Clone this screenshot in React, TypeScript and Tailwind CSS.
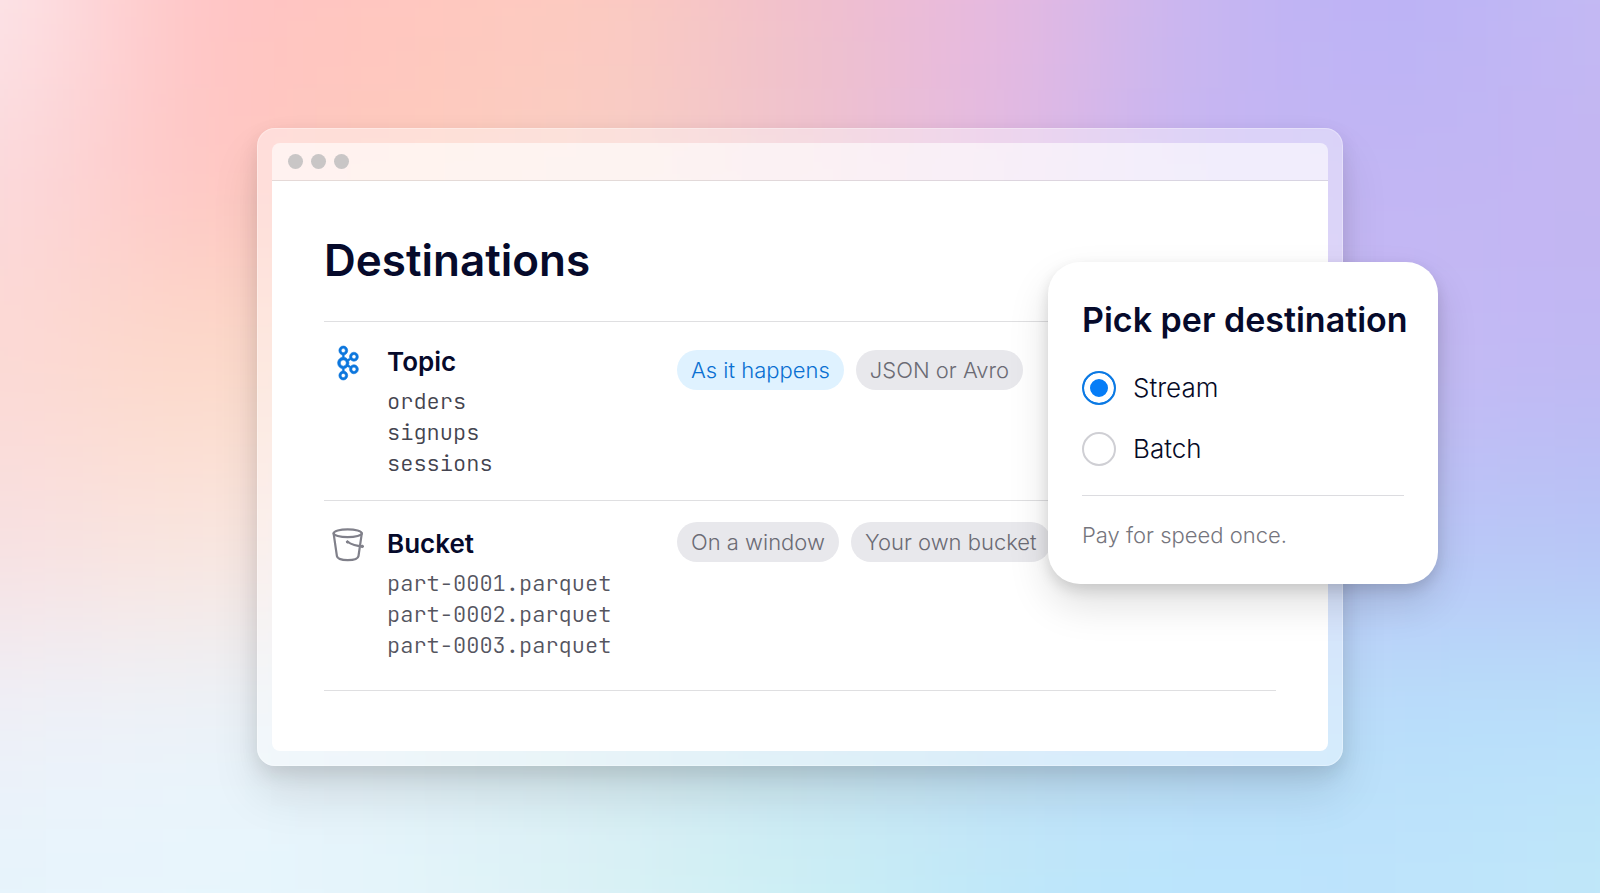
import type { ReactNode } from "react";
import { SiApachekafka } from "react-icons/si";

/* Colour nodes of the backdrop, row by row from the top left corner. */
const MESH: string[][] = [
  ["#fce6ea", "#ffc3c4", "#ffc6bf", "#fdcbc0", "#f0c0cc", "#e8b9e0", "#c6b6f2", "#bab2f6", "#c4baf3"],
  ["#fbdadd", "#ffc5c3", "#fecbbb", "#f8cfc4", "#efc3cc", "#e3b9e2", "#c4b5f3", "#c2b6f4", "#c3b5f2"],
  ["#fcd9d5", "#fcd9c7", "#fbdcd0", "#f5d6d6", "#eccfde", "#dcc4ea", "#cbbcf4", "#c6b9f5", "#c0b8f3"],
  ["#f8dfe1", "#fbe5dc", "#f4e6e6", "#eae6ee", "#dcdcf0", "#cdd2f4", "#c0c8f6", "#bac6f7", "#b7c4f6"],
  ["#eef0f8", "#ecf3fa", "#e2eff6", "#d6ebf2", "#cae4f2", "#c3e0f6", "#bcddfa", "#b8defa", "#b9e0fa"],
  ["#e6f4fc", "#e8f6fe", "#e4f5fb", "#dbf2f6", "#ccf0f4", "#bfe8f9", "#bae5fd", "#bfe4fb", "#c0e8f9"],
];

function Backdrop() {
  const lastRow = MESH.length - 1;
  const lastCol = MESH[0].length - 1;
  return (
    <svg
      aria-hidden="true"
      viewBox="0 0 8 5"
      preserveAspectRatio="none"
      className="absolute inset-0 h-full w-full"
    >
      <defs>
        <filter id="soften" filterUnits="userSpaceOnUse" x="-2" y="-2" width="12" height="9" colorInterpolationFilters="sRGB">
          <feGaussianBlur stdDeviation="0.42" />
        </filter>
      </defs>
      <g filter="url(#soften)">
        {MESH.map((row, r) =>
          row.map((fill, c) => {
            const x = c === 0 ? -2 : c - 0.5;
            const y = r === 0 ? -2 : r - 0.5;
            const right = c === lastCol ? 10 : c + 0.52;
            const bottom = r === lastRow ? 7 : r + 0.52;
            return <rect key={`${r}-${c}`} x={x} y={y} width={right - x} height={bottom - y} fill={fill} />;
          }),
        )}
      </g>
    </svg>
  );
}

function BucketIcon() {
  return (
    <svg
      aria-hidden="true"
      viewBox="0 0 34 34"
      className="h-[34px] w-[34px]"
      fill="none"
      stroke="#80808a"
      strokeWidth="2.2"
      strokeLinecap="round"
      strokeLinejoin="round"
    >
      <ellipse cx="16.7" cy="5.2" rx="14.1" ry="3.9" />
      <path d="M2.6 5.4 5.9 28c.4 2.6 5 4.1 10.8 4.1s10.4-1.5 10.8-4.1L30.8 5.4" />
      <path d="M16.5 13.9c3.6 2.3 8.8 4.1 15 4.5" />
      <circle cx="16.5" cy="13.9" r="1.2" fill="#80808a" strokeWidth="1" />
      <circle cx="31.3" cy="18.4" r="1.2" fill="#80808a" strokeWidth="1" />
    </svg>
  );
}

type Tag = { label: string; active?: boolean };

type Destination = {
  name: string;
  icon: ReactNode;
  items: string[];
  tags: Tag[];
  rowClass: string;
  infoClass: string;
  itemsClass: string;
  tagsClass: string;
};

const DESTINATIONS: Destination[] = [
  {
    name: "Topic",
    icon: (
      <SiApachekafka
        aria-hidden="true"
        className="h-[34px] w-[34px] overflow-visible stroke-[#0c76dd] stroke-[0.4px] text-[#0c76dd]"
      />
    ),
    items: ["orders", "signups", "sessions"],
    tags: [{ label: "As it happens", active: true }, { label: "JSON or Avro" }],
    rowClass: "pt-5 pb-[21px]",
    infoClass: "mt-0",
    itemsClass: "text-[#44444f]",
    tagsClass: "mt-2",
  },
  {
    name: "Bucket",
    icon: <BucketIcon />,
    items: ["part-0001.parquet", "part-0002.parquet", "part-0003.parquet"],
    tags: [{ label: "On a window" }, { label: "Your own bucket" }],
    rowClass: "pt-[21px] pb-[29px]",
    infoClass: "mt-0.5",
    itemsClass: "text-[#55555f]",
    tagsClass: "mt-0",
  },
];

function DestinationRow({ name, icon, items, tags, rowClass, infoClass, itemsClass, tagsClass }: Destination) {
  return (
    <li className={`grid grid-cols-[353px_1fr] border-b border-[#dfdfe1] ${rowClass}`}>
      <div className={`flex gap-[15px] ${infoClass}`}>
        <div className="flex h-[42px] w-12 shrink-0 items-center justify-center">{icon}</div>
        <div>
          <h2 className="text-[26px] leading-10 font-semibold text-[#060a2b]">{name}</h2>
          <ul
            className={`mt-1 font-['JetBrains_Mono','Liberation_Mono',monospace] text-[22px] leading-[31px] font-light ${itemsClass}`}
          >
            {items.map((item) => (
              <li key={item}>{item}</li>
            ))}
          </ul>
        </div>
      </div>
      <ul className={`flex items-start gap-3 ${tagsClass}`}>
        {tags.map(({ label, active }) => (
          <li
            key={label}
            className={`rounded-full px-3.5 text-[22px] leading-10 font-[340] whitespace-nowrap ${
              active ? "bg-[#dff2ff] text-[#0a70d2]" : "bg-[#e8e8ec] text-[#6b6b74]"
            }`}
          >
            {label}
          </li>
        ))}
      </ul>
    </li>
  );
}

function ModeOption({ value, label, checked }: { value: string; label: string; checked?: boolean }) {
  return (
    <label className="flex items-center gap-[17px] text-[26px] leading-[34px] font-[350] text-[#060a26]">
      <input
        type="radio"
        name="mode"
        value={value}
        defaultChecked={checked}
        className="h-[34px] w-[34px] shrink-0 appearance-none rounded-full border-2 border-[#cfcfd4] bg-white checked:border-[#0b79e3] checked:bg-[#067df7] checked:shadow-[inset_0_0_0_6px_#fff]"
      />
      {label}
    </label>
  );
}

function ModeCard() {
  return (
    <form className="absolute top-[133px] -right-[96px] w-[390px] rounded-[32px] bg-white p-[34px] shadow-[0_20px_40px_rgba(0,0,0,0.13),0_6px_14px_rgba(0,0,0,0.12)]">
      <fieldset>
        <legend className="text-[34px] leading-[48px] font-semibold whitespace-nowrap text-[#060a2b]">
          Pick per destination
        </legend>
        <div className="mt-[27px] flex flex-col gap-[27px]">
          <ModeOption value="stream" label="Stream" checked />
          <ModeOption value="batch" label="Batch" />
        </div>
      </fieldset>
      <p className="mt-[29px] border-t border-[#dcdce0] pt-6 text-[22px] leading-[30px] font-[340] text-[#75757d]">
        Pay for speed once.
      </p>
    </form>
  );
}

export default function App() {
  return (
    <main className="relative flex min-h-screen items-center justify-center overflow-hidden px-28 py-16 font-['Inter','Liberation_Sans',sans-serif]">
      <Backdrop />
      <div className="relative w-full max-w-[1086px] rounded-[18px] border border-white/30 bg-white/40 p-[14px] shadow-[0_28px_48px_rgba(0,0,0,0.1),0_8px_20px_rgba(0,0,0,0.1)]">
        <div className="overflow-hidden rounded-lg">
          <div className="flex h-[38px] items-center gap-2 border-b border-black/10 bg-white/60 px-4">
            <span className="h-[15px] w-[15px] rounded-full bg-[#c9c6c6]" />
            <span className="h-[15px] w-[15px] rounded-full bg-[#c9c6c6]" />
            <span className="h-[15px] w-[15px] rounded-full bg-[#c9c6c6]" />
          </div>
          <section className="bg-white px-[52px] pt-[52px] pb-[60px]">
            <h1 className="pb-[34px] text-[44px] leading-[54px] font-semibold text-[#060a2b]">Destinations</h1>
            <ul className="border-t border-[#dfdfe1]">
              {DESTINATIONS.map((destination) => (
                <DestinationRow key={destination.name} {...destination} />
              ))}
            </ul>
          </section>
        </div>
        <ModeCard />
      </div>
    </main>
  );
}
